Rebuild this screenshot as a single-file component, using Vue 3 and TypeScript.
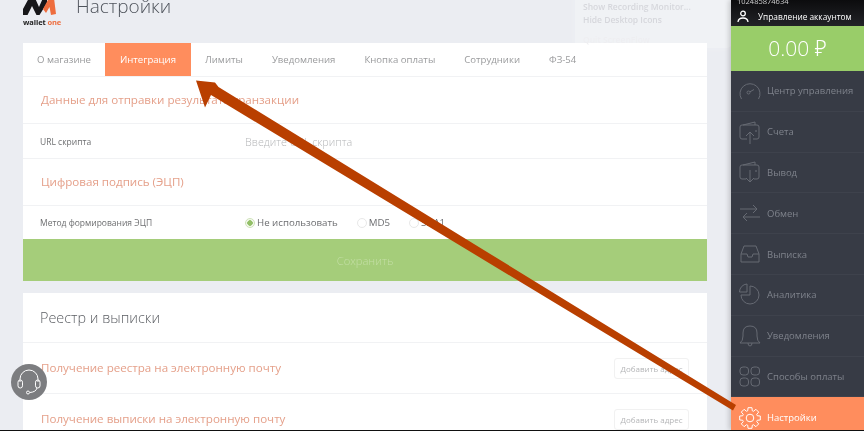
<script setup lang="ts">
interface Tab { label: string; active?: boolean }
const tabs: Tab[] = [
  { label: 'О магазине' },
  { label: 'Интеграция', active: true },
  { label: 'Лимиты' },
  { label: 'Уведомления' },
  { label: 'Кнопка оплаты' },
  { label: 'Сотрудники' },
  { label: 'ФЗ-54' },
]
const radios = [
  { label: 'Не использовать', checked: true },
  { label: 'MD5', checked: false },
  { label: 'SHA1', checked: false },
]
const nav = [
  { label: 'Центр управления', icon: 'gauge' },
  { label: 'Счета', icon: 'up' },
  { label: 'Вывод', icon: 'down' },
  { label: 'Обмен', icon: 'swap' },
  { label: 'Выписка', icon: 'inbox' },
  { label: 'Аналитика', icon: 'pie' },
  { label: 'Уведомления', icon: 'bell' },
  { label: 'Способы оплаты', icon: 'grid' },
  { label: 'Настройки', icon: 'gear', active: true },
]

// Outline of an 8-tooth gear centred on (11, 12).
function gearPath(): string {
  const pts: string[] = []
  const teeth = 8
  const rOut = 10.5
  const rIn = 7.6
  for (let i = 0; i < teeth; i++) {
    const a = (i * 2 * Math.PI) / teeth
    const offsets: [number, number][] = [
      [-0.3, rIn],
      [-0.19, rOut],
      [0.19, rOut],
      [0.3, rIn],
    ]
    for (const [d, r] of offsets) {
      pts.push(`${(11 + r * Math.sin(a + d)).toFixed(2)} ${(12 - r * Math.cos(a + d)).toFixed(2)}`)
    }
  }
  return `M${pts.join(' L')}Z`
}
const gear = gearPath()
</script>

<template>
  <div class="screen">
    <div class="body">
      <main class="main">
        <header class="header">
          <div class="logo">
            <svg class="mark" width="33" height="16" viewBox="0 0 33 16">
              <path d="M0 15 V9 L6 -2 H12 L16 7 L20 -2 H24 V3 L16.500 15 H13.500 L9 6 L4.500 15Z" fill="#17171a" />
              <path d="M20 9 L26 -2 H31 L33 14 L28 15 L26.500 7 L23 13Z" fill="#ee6d3e" />
            </svg>
            <span class="wordmark">wallet <em>one</em></span>
          </div>
          <h1 class="title">Настройки</h1>
        </header>

        <section class="card">
          <nav class="tabs">
            <a v-for="t in tabs" :key="t.label" class="tab" :class="{ active: t.active }">{{ t.label }}</a>
          </nav>
          <div class="row heading-row tall"><h2 class="orange">Данные для отправки результата транзакции</h2></div>
          <div class="row field-row">
            <label class="label">URL скрипта</label>
            <span class="placeholder">Введите URL скрипта</span>
          </div>
          <div class="row heading-row tall"><h2 class="orange">Цифровая подпись (ЭЦП)</h2></div>
          <div class="row field-row no-border">
            <label class="label">Метод формирования ЭЦП</label>
            <div class="radios">
              <span v-for="r in radios" :key="r.label" class="radio">
                <i class="dot" :class="{ checked: r.checked }"></i>{{ r.label }}
              </span>
            </div>
          </div>
          <button class="save">Сохранить</button>
        </section>

        <section class="card second">
          <div class="row registry"><h2 class="plain">Реестр и выписки</h2></div>
          <div class="row email">
            <h2 class="orange">Получение реестра на электронную почту</h2>
            <button class="add">Добавить адрес</button>
          </div>
          <div class="row email no-border">
            <h2 class="orange">Получение выписки на электронную почту</h2>
            <button class="add">Добавить адрес</button>
          </div>
        </section>
      </main>

      <aside class="side">
        <div class="account">
          <div class="acc-id">102485874634</div>
          <div class="acc-line">
            <svg width="12" height="13" viewBox="0 0 12 13" fill="none" stroke="#fff" stroke-width="1.300">
              <circle cx="6" cy="3.500" r="2.300" />
              <path d="M1 12 C1.300 8.500 3.500 8 6 8 S10.700 8.500 11 12" />
            </svg>
            <span>Управление аккаунтом</span>
          </div>
        </div>
        <div class="balance">0.00 ₽</div>
        <ul class="nav">
          <li v-for="n in nav" :key="n.label" class="nav-item" :class="{ active: n.active }">
            <svg class="nav-icon" width="22" height="24" viewBox="0 0 22 24" fill="none" stroke="currentColor" stroke-width="1">
              <template v-if="n.icon === 'gauge'">
                <path d="M2.500 20 A10 10 0 1 1 19.500 20" />
                <circle cx="9.500" cy="13.500" r="1.500" />
                <path d="M11 12.800 L15 10.500" />
              </template>
              <template v-else-if="n.icon === 'up'">
                <path d="M4 5 L16 2 V5 M8 19 H3 Q1 19 1 17 V7 Q1 5 3 5 H18 Q20 5 20 7 V17 Q20 19 18 19 H14" />
                <path d="M11 24 V12 M7 16 L11 12 L15 16" />
                <circle cx="17" cy="11" r=".5" />
              </template>
              <template v-else-if="n.icon === 'down'">
                <path d="M4 5 L16 2 V5 M7 19 H3 Q1 19 1 17 V7 Q1 5 3 5 H18 Q20 5 20 7 V17 Q20 19 18 19 H15" />
                <path d="M11 10 V22 M7 18 L11 22 L15 18" />
                <circle cx="17" cy="11" r=".5" />
              </template>
              <template v-else-if="n.icon === 'swap'">
                <path d="M1 8 H18 M14 4 L18 8 L14 12 M21 16 H4 M8 12 L4 16 L8 20" />
              </template>
              <template v-else-if="n.icon === 'inbox'">
                <path d="M2 12 L5 4 H17 L20 12 V20 H2Z" />
                <path d="M2 12 H8 L9 15 H13 L14 12 H20" />
              </template>
              <template v-else-if="n.icon === 'pie'">
                <path d="M11 3 A9 9 0 1 1 2 12 H11Z" />
                <path d="M8 1 A8 8 0 0 0 0.500 9 H8Z" />
              </template>
              <template v-else-if="n.icon === 'bell'">
                <path d="M1 19 Q4 17 4 12 V9 Q4 2 11 2 T18 9 V12 Q18 17 21 19Z" />
                <path d="M9 19 Q9 22 11 22 T13 19" />
              </template>
              <template v-else-if="n.icon === 'grid'">
                <rect x="1" y="3" width="8.500" height="8" rx="3" />
                <rect x="12" y="3" width="8.500" height="8" rx="3" />
                <rect x="1" y="14" width="8.500" height="8" rx="3" />
                <rect x="12" y="14" width="8.500" height="8" rx="3" />
              </template>
              <template v-else>
                <path :d="gear" />
                <circle cx="11" cy="12" r="3.800" />
              </template>
            </svg>
            <span>{{ n.label }}</span>
          </li>
        </ul>
      </aside>
    </div>
    <div class="strip"></div>

    <div class="popup">
      <div class="popup-item">Show Recording Monitor...</div>
      <div class="popup-item">Hide Desktop Icons</div>
      <div class="popup-item quit">Quit ScreenFlow</div>
    </div>

    <button class="help" aria-label="Поддержка">
      <svg width="24" height="26" viewBox="0 0 24 26" fill="none" stroke="#fff" stroke-width="1">
        <path d="M3 13 V10 A9 9 0 0 1 21 10 V13" />
        <rect x="1" y="11" width="4.500" height="8" rx="2.200" />
        <rect x="18.500" y="11" width="4.500" height="8" rx="2.200" />
        <path d="M20 19 Q19 23 13 23.500" />
        <circle cx="11" cy="23.500" r="1.500" />
      </svg>
    </button>

    <svg class="arrow" width="864" height="431" viewBox="0 0 864 431">
      <path d="M196 80.500 L215 82.500 L218.500 87 L736 405 L733 410.500 L211 95 L205 107.500Z" fill="#b93f00" />
    </svg>
  </div>
</template>

<style>
html, body { margin: 0; background: #ebedf2; }
</style>

<style scoped>
* { box-sizing: border-box; }
.screen {
  position: relative;
  width: 864px;
  height: 431px;
  overflow: hidden;
  display: flex;
  flex-direction: column;
  font-family: "Open Sans", "Noto Sans", sans-serif;
  background: #ebedf2;
  filter: blur(0.4px);
}
.body { flex: 1; min-height: 0; display: flex; }
.strip { height: 1px; background: #111; }
.main { width: 731px; padding: 0 24px 0 23px; overflow: hidden; }
.header { height: 43px; display: flex; gap: 20px; align-items: flex-start; }
.logo { width: 33px; display: flex; flex-direction: column; }
.mark { display: block; }
.wordmark { font-size: 7.500px; font-weight: 700; color: #222; line-height: 10px; margin-top: 1px; white-space: nowrap; letter-spacing: -.1px; }
.wordmark em { font-style: normal; color: #ee6d3e; }
.title { margin: -9px 0 0; font-size: 19px; line-height: 30px; font-weight: 300; color: #4f545c; }
.card { background: #fff; display: flow-root; }
.second { margin-top: 12px; }
.tabs { display: flex; height: 34px; border-bottom: 1px solid #f1f2f4; }
.tab { height: 33px; padding: 0 14.500px; font-size: 9.600px; line-height: 33px; color: #9a9b9d; white-space: nowrap; }
.tab:first-child { padding-left: 14px; }
.tab.active { background: #ff8d5d; color: #fff; }
.row { display: flex; align-items: center; padding: 0 17px; border-bottom: 1px solid #f1f2f4; }
.no-border { border-bottom: 0; }
.tall { height: 47px; }
.field-row { height: 35px; }
.field-row.no-border { height: 33px; }
h2 { margin: 0; font-weight: 400; }
.orange { font-size: 11.600px; line-height: 14px; margin-top: -1px; color: #e5a08a; padding-left: 1px; }
.plain { font-size: 14.400px; font-weight: 300; color: #5a5d62; }
.label { width: 205px; font-size: 8.500px; color: #6d6e70; }
.placeholder { font-size: 10.800px; font-weight: 300; color: #b5b6b8; }
.radios { display: flex; gap: 19px; }
.radio { display: flex; align-items: center; gap: 2px; font-size: 9.700px; color: #6c6d70; }
.dot { width: 10px; height: 10px; border-radius: 50%; border: 1px solid #e8e8e8; display: block; }
.dot.checked { border-color: #cfe3b9; background: radial-gradient(circle, #93c068 0 2.500px, #f4f9ee 3px); }
.save { display: block; width: 100%; height: 42px; border: 0; background: #a5cd7a; color: #c4dfa6; font: 300 11.200px "Open Sans", sans-serif; }
.registry { height: 50px; }
.email { height: 51px; justify-content: space-between; padding-right: 18px; }
.add { width: 75px; height: 21px; padding: 0; border: 1px solid #f1f1f1; border-radius: 3px; background: #fff; color: #b5b6b8; font: 400 8px "Open Sans", sans-serif; white-space: nowrap; }

.side { width: 133px; display: flex; flex-direction: column; overflow: hidden; background: #373b45; box-shadow: -2px 0 5px rgba(0,0,0,.18); z-index: 1; }
.account { flex: none; height: 26px; background: linear-gradient(#0c0c0e, #222327); color: #fff; overflow: hidden; padding-left: 6px; }
.acc-id { font-size: 7.500px; line-height: 9px; margin-top: -3px; color: #cfcfd0; }
.acc-line { display: flex; align-items: center; gap: 9px; height: 17px; margin-top: 2px; font-size: 8.300px; white-space: nowrap; }
.balance { flex: none; height: 45px; background: #99cd69; color: #fff; font-size: 21px; font-weight: 300; line-height: 45px; text-align: center; }
.nav { list-style: none; margin: 0; padding: 0; flex: none; }
.nav-item { height: 40.800px; display: flex; align-items: center; gap: 6px; padding-left: 8px; font-size: 9.500px; color: #7e828b; border-bottom: 1px solid #3e424c; white-space: nowrap; }
.nav-icon { flex: none; color: #666a73; }
.nav-item.active { background: #ff8d5d; color: #fff; border-bottom: 0; }
.nav-item.active .nav-icon { color: #fff; }

.popup { position: absolute; left: 575px; top: -10px; width: 157px; height: 58px; padding: 10px 8px 0; background: rgba(255,255,255,.28); border-radius: 0 0 5px 5px; box-shadow: 0 0 12px rgba(255,255,255,.2); z-index: 0; }
.popup-item { font-size: 8.500px; font-weight: 600; line-height: 13px; color: #d6d7dc; white-space: nowrap; }
.quit { margin-top: 7px; color: #eeeef1; }

.help { position: absolute; left: 11px; top: 364px; width: 36px; height: 36px; padding: 0; border: 0; border-radius: 50%; background: #7c7d80; display: flex; align-items: center; justify-content: center; z-index: 2; }
.arrow { position: absolute; left: 0; top: 0; z-index: 3; pointer-events: none; }
</style>
